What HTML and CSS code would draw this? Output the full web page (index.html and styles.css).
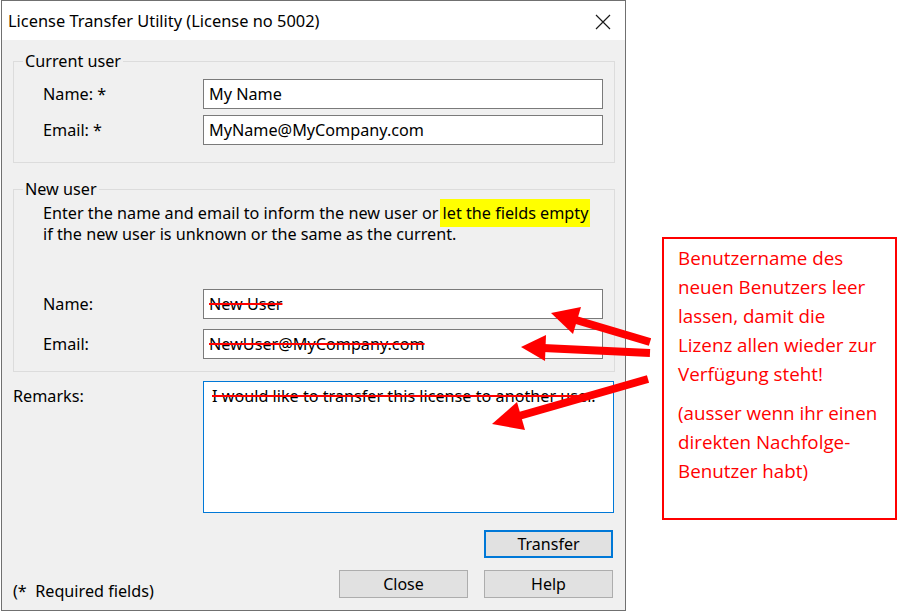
FILE: index.html
```html
<html>
    <head>
        <title>License Transfer Utility</title>
        <link rel="stylesheet" href="styles.css">
    </head>
    <body>
        <div class="page">
            <div class="dialog">
                <div class="titlebar">
                    <span class="title">License Transfer Utility (License no 5002)</span>
                    <svg class="close-x" width="16" height="16" viewBox="0 0 16 16">
                        <path d="M1 1 L15 15 M15 1 L1 15" stroke="#1a1a1a" stroke-width="1.2" fill="none"/>
                    </svg>
                </div>

                <div class="content">
                    <fieldset class="group current">
                        <legend>Current user</legend>
                        <div class="row">
                            <label>Name: *</label>
                            <div class="field">My Name</div>
                        </div>
                        <div class="row">
                            <label>Email: *</label>
                            <div class="field">MyName@MyCompany.com</div>
                        </div>
                    </fieldset>

                    <fieldset class="group newuser">
                        <legend>New user</legend>
                        <p class="hint">Enter the name and email to inform the new user or <mark>let the fields empty</mark><br>if the new user is unknown or the same as the current.</p>
                        <div class="rows-wide">
                            <div class="row">
                                <label>Name:</label>
                                <div class="field"><span class="struck">New User</span></div>
                            </div>
                            <div class="row">
                                <label>Email:</label>
                                <div class="field"><span class="struck">NewUser@MyCompany.com</span></div>
                            </div>
                        </div>
                    </fieldset>

                    <div class="remarks">
                        <label>Remarks:</label>
                        <div class="memo"><span class="struck">I would like to transfer this license to another user.</span></div>
                    </div>

                    <div class="footer">
                        <button class="btn default transfer">Transfer</button>
                        <span class="required">(*&nbsp; Required fields)</span>
                        <button class="btn close">Close</button>
                        <button class="btn help">Help</button>
                    </div>
                </div>
            </div>

            <div class="note">
                <p>Benutzername des neuen Benutzers leer lassen, damit die Lizenz allen wieder zur Verfügung steht!</p>
                <p>(ausser wenn ihr einen direkten Nachfolge-Benutzer habt)</p>
            </div>

            <!-- red annotation arrows drawn over the dialog -->
            <svg class="arrows" width="900" height="615" viewBox="0 0 900 615">
                <g fill="#ff0000" stroke="#ff0000">
                    <line x1="650" y1="342" x2="576" y2="320" stroke-width="8"/>
                    <polygon points="551,313 581,307 573,334" stroke="none"/>
                    <line x1="650" y1="353" x2="543" y2="348" stroke-width="8"/>
                    <polygon points="521,347 546,335 545,361" stroke="none"/>
                    <line x1="648" y1="379" x2="519" y2="416" stroke-width="8"/>
                    <polygon points="492,424 517,402 525,430" stroke="none"/>
                </g>
            </svg>
        </div>
    </body>
</html>
```

FILE: styles.css
```css
body {
    margin: 0;
    background-color: #fff;
    font-family: "Noto Sans", "Open Sans", sans-serif;
}

.page {
    position: relative;
    width: 900px;
    height: 615px;
    display: flex;
    align-items: flex-start;
}

/* The dialog window */
.dialog {
    margin-left: 1px;
    width: 625px;
    height: 611px;
    box-sizing: border-box;
    border: 1px solid #707070;
    background-color: #f0f0f0;
    display: flex;
    flex-direction: column;
    font-size: 16.2px;
    color: #000;
}

.titlebar {
    height: 39px;
    background-color: #fff;
    display: flex;
    align-items: center;
    justify-content: space-between;
    padding: 0 14px 0 6px;
    font-size: 16.4px;
}

.close-x {
    margin-top: 2px;
}

.content {
    padding: 11px 10px 0 11px;
}

/* Group boxes */
.group {
    margin: 0;
    border: 1px solid #dcdcdc;
    padding: 8px 10px 17px 9px;
    min-width: 0;
}

.group legend {
    padding: 0 2px;
    line-height: 20px;
}

.group .row {
    margin-left: 20px;
}

.row {
    display: flex;
    align-items: center;
}

.row + .row {
    margin-top: 6px;
}

.row label {
    width: 160px;
}

.field {
    width: 400px;
    height: 30px;
    box-sizing: border-box;
    border: 1px solid #7a7a7a;
    background-color: #fff;
    padding-left: 5px;
    line-height: 28px;
}

.newuser {
    margin-top: 16px;
    padding-top: 4px;
    padding-bottom: 12px;
}

.hint {
    margin: 0 0 44px 20px;
    line-height: 21px;
}

.hint mark {
    background-color: #ffff00;
    padding: 3px 2px 3px 3px;
    margin-left: -3px;
}

.rows-wide .row + .row {
    margin-top: 10px;
}

.struck {
    text-decoration: line-through;
    text-decoration-color: #ff0000;
    text-decoration-thickness: 2px;
}

/* Remarks */
.remarks {
    display: flex;
    margin-top: 9px;
}

.remarks label {
    width: 190px;
    padding-top: 5px;
    line-height: 20px;
}

.memo {
    width: 411px;
    height: 132px;
    box-sizing: border-box;
    border: 1px solid #0078d7;
    background-color: #fff;
    padding: 4px 8px;
    line-height: 20px;
}

/* Buttons */
.footer {
    display: grid;
    grid-template-columns: 1fr 129px 129px;
    grid-template-rows: 28px 28px;
    column-gap: 16px;
    row-gap: 12px;
    margin-top: 17px;
    padding-right: 2px;
}

.btn {
    font-family: inherit;
    font-size: 16px;
    background-color: #e1e1e1;
    border: 1px solid #adadad;
    padding: 0;
    color: #000;
}

.btn.default {
    border: 2px solid #0078d7;
}

.transfer {
    grid-column: 3;
    grid-row: 1;
}

.required {
    grid-column: 1;
    grid-row: 2;
    align-self: end;
    line-height: 20px;
    margin-bottom: -3px;
}

.close {
    grid-column: 2;
    grid-row: 2;
}

.help {
    grid-column: 3;
    grid-row: 2;
}

/* The red callout box */
.note {
    margin: 237px 0 0 36px;
    width: 235px;
    height: 283px;
    box-sizing: border-box;
    border: 2px solid #ff0000;
    padding: 5px 12px 0 14px;
    color: #ff0000;
    font-family: "Open Sans", sans-serif;
    font-size: 18.8px;
    line-height: 29px;
}

.note p {
    margin: 0 0 10px 0;
}

.arrows {
    position: absolute;
    top: 0;
    left: 0;
    pointer-events: none;
}
```
